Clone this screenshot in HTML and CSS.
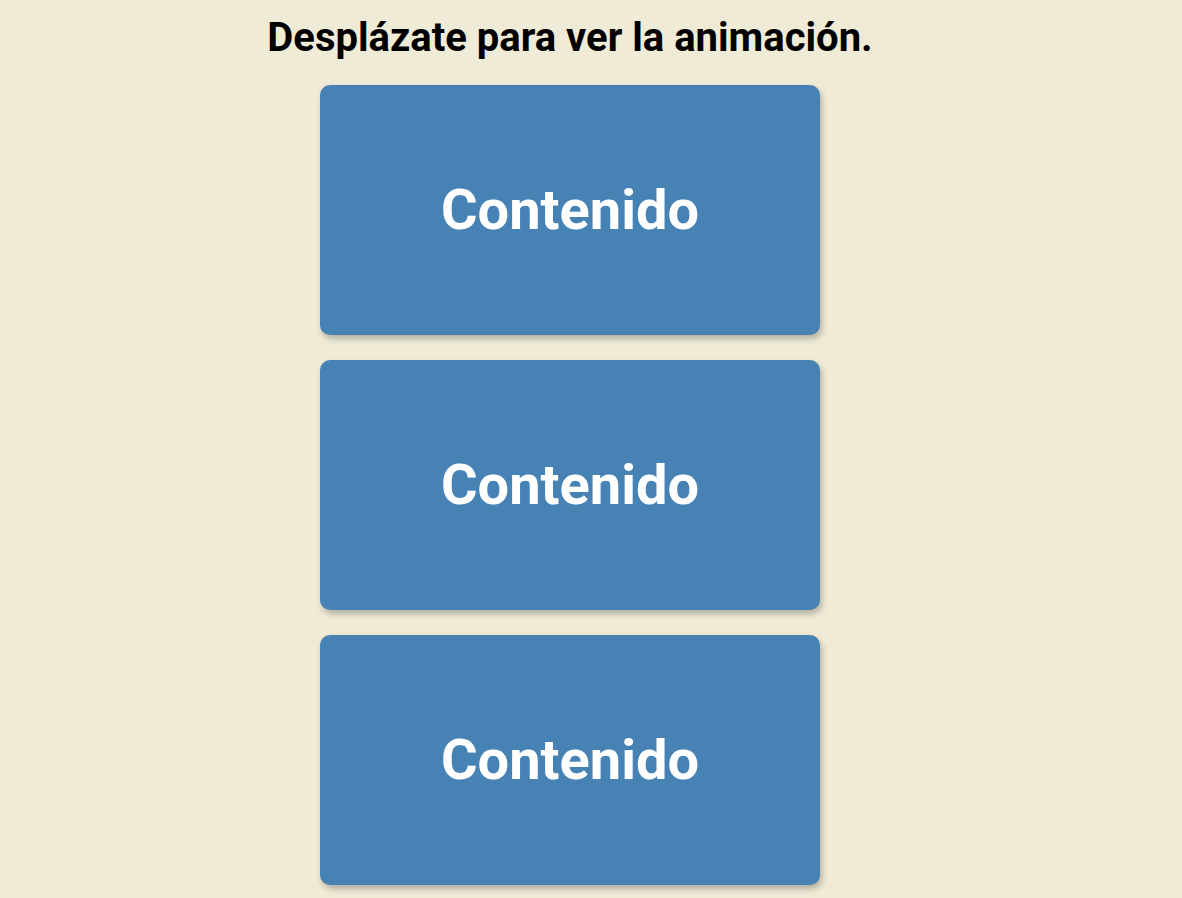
FILE: index.html
```html
<!DOCTYPE html>
<html lang="es">
<head>
<meta charset="utf-8">
<title>Animación</title>
<link rel="stylesheet" href="styles.css">
</head>
<body>
<main class="page">
  <h1 class="title">Desplázate para ver la animación.</h1>
  <div class="cards">
    <div class="card">Contenido</div>
    <div class="card">Contenido</div>
    <div class="card">Contenido</div>
  </div>
</main>
</body>
</html>
```
FILE: styles.css
```css
html, body {
  margin: 0;
  padding: 0;
  background: #efebd6;
}
body {
  font-family: Roboto, "Liberation Sans", sans-serif;
}
.page {
  width: 1140px;
  display: flex;
  flex-direction: column;
  align-items: center;
}
.title {
  margin: 14px 0 0;
  font-size: 40px;
  font-weight: 700;
  line-height: 48px;
  color: #000;
}
.cards {
  margin-top: 23px;
  display: flex;
  flex-direction: column;
  gap: 25px;
  padding-bottom: 40px;
}
.card {
  width: 500px;
  height: 250px;
  border-radius: 10px;
  background: #4682b4;
  color: #fff;
  font-size: 56px;
  font-weight: 700;
  display: flex;
  align-items: center;
  justify-content: center;
  box-shadow: 2px 4px 6px rgba(0, 0, 0, 0.25);
}
```
